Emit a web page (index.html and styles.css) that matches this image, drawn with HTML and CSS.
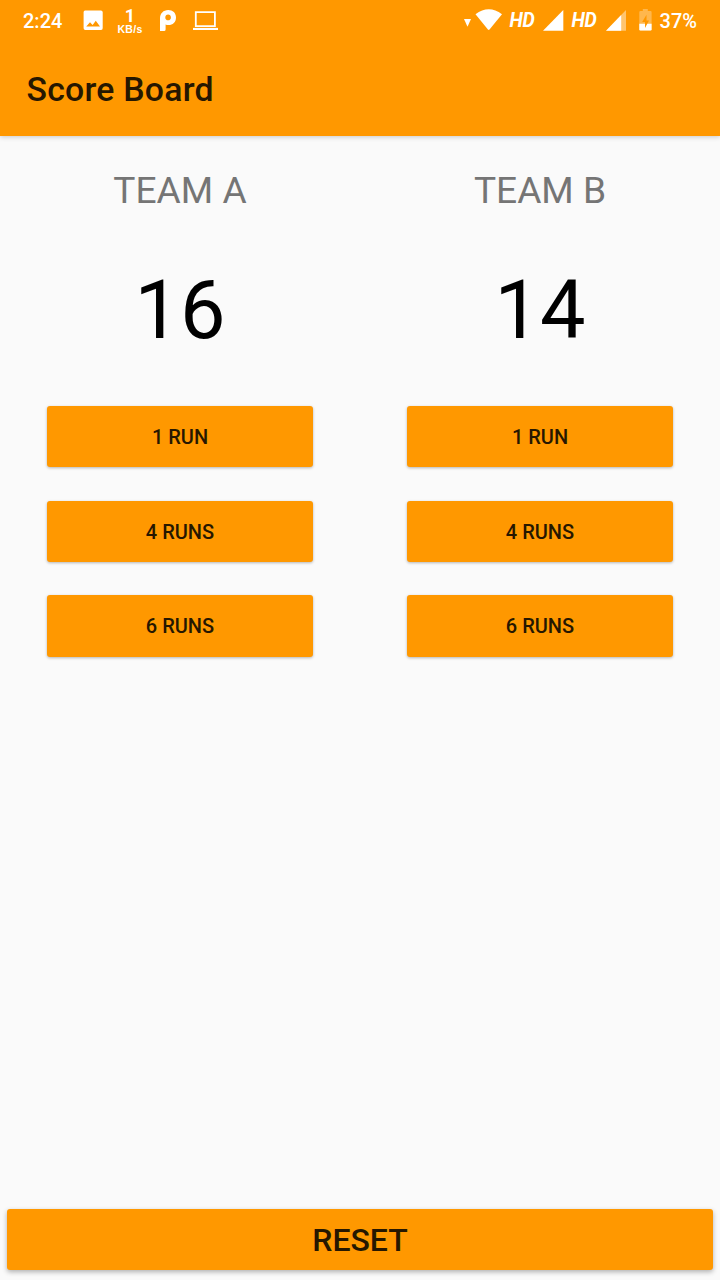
FILE: index.html
```html
<!DOCTYPE html>
<html lang="en">
<head>
<meta charset="utf-8">
<title>Score Board</title>
<link rel="stylesheet" href="styles.css">
</head>
<body>
<div class="screen">
  <header class="header">
    <div class="status">
      <div class="status-left">
        <span class="clock">2:24</span>
        <svg class="icon-picture" width="20" height="20" viewBox="0 0 20 20"><path fill="#fff" fill-rule="evenodd" d="M2 0.5H18A1.8 1.8 0 0 1 19.7 2V18A1.8 1.8 0 0 1 18 19.9H2A1.8 1.8 0 0 1 .6 18V2A1.8 1.8 0 0 1 2 .5ZM3.200 16.600H17L12.800 10.800L9.600 14.900L7 12.200Z"/></svg>
        <span class="speed"><span class="speed-value">1</span><span class="speed-unit">KB/s</span></span>
        <svg class="icon-p" width="17" height="22" viewBox="0 0 17 22"><path fill="#fff" fill-rule="evenodd" d="M0 21V8.5C0 3.5 3.3 0 8.2 0C12.800 0 16 3 16 7.400C16 12 12.800 15 8.500 15C7.300 15 6.400 14.800 5.600 14.400V19.500Q5.600 21 4 21ZM8.100 4.500C6.400 4.500 5.300 5.700 5.300 7.400S6.400 10.300 8.100 10.300S10.900 9.100 10.900 7.400S9.800 4.500 8.100 4.500Z"/></svg>
        <svg class="icon-laptop" width="26" height="20" viewBox="0 0 26 20"><path fill="none" stroke="#fff" stroke-width="1.800" d="M2.800 1.100H21.900V15.200H2.800Z"/><path fill="#fff" d="M0 16.900H25V19H0Z"/></svg>
      </div>
      <div class="status-right">
        <svg class="icon-arrow" width="7" height="8" viewBox="0 0 7 8"><path fill="#fff" d="M0 0H7L3.500 7.700Z"/></svg>
        <svg class="icon-wifi" width="28" height="22" viewBox="0 0 28 22"><path fill="#fff" d="M.5 5.200Q13.700-4.600 27 5.200L14.500 20.600Q13.700 21.500 12.900 20.600Z"/></svg>
        <span class="hd">HD</span>
        <svg class="icon-signal" width="21" height="21" viewBox="0 0 21 21"><path fill="#fff" d="M0 20.700L20.300 0V20.700Z"/></svg>
        <span class="hd">HD</span>
        <svg class="icon-signal-weak" width="21" height="21" viewBox="0 0 21 21"><path fill="#ffc56f" d="M0 20.700L20 0V20.700Z"/><path fill="#fff" d="M0 20.700L15.200 5V20.700Z"/></svg>
        <svg class="icon-battery" width="13" height="22" viewBox="0 0 13 22"><path fill="#ffb74d" d="M3.800 0H8.800V2.100H11.500Q12.600 2.100 12.600 3.300V20.300Q12.600 21.500 11.500 21.500H1.400Q.3 21.500 .3 20.300V3.300Q.3 2.100 1.400 2.100H3.800Z"/><path fill="#fff" d="M.3 14.700H12.600V20.300Q12.600 21.500 11.500 21.500H1.400Q.3 21.500 .3 20.300Z"/><path fill="#ff9800" d="M7.500 5.800L3.200 13H6V19L10 11.400H7.500Z"/></svg>
        <span class="percent">37%</span>
      </div>
    </div>
    <h1 class="title">Score Board</h1>
  </header>
  <main class="teams">
    <section class="team">
      <h2 class="team-name">TEAM A</h2>
      <div class="score">16</div>
      <div class="actions">
        <button class="button">1 RUN</button>
        <button class="button">4 RUNS</button>
        <button class="button">6 RUNS</button>
      </div>
    </section>
    <section class="team">
      <h2 class="team-name">TEAM B</h2>
      <div class="score">14</div>
      <div class="actions">
        <button class="button">1 RUN</button>
        <button class="button">4 RUNS</button>
        <button class="button">6 RUNS</button>
      </div>
    </section>
  </main>
  <footer class="footer"><button class="button button-reset">RESET</button></footer>
</div>
</body>
</html>
```
FILE: styles.css
```css
* { box-sizing: border-box; }
body { margin: 0; background: #fafafa; font-family: Roboto, sans-serif; }
svg { display: block; flex: none; }
.screen { height: 1280px; display: flex; flex-direction: column; overflow: hidden; }
.header {
  height: 136px;
  flex: none;
  background: #ff9800;
  box-shadow: 0 1px 5px rgba(0, 0, 0, .2);
}
.status {
  height: 42px;
  display: flex;
  justify-content: space-between;
  padding: 0 23px;
  color: #fff;
  font-size: 20px;
  font-weight: 500;
  line-height: 42px;
}
.status-left, .status-right { display: flex; align-items: flex-start; }
.clock { width: 60px; }
.icon-picture { margin-top: 10px; }
.speed {
  width: 34px;
  margin-left: 10px;
  padding-top: 8px;
  display: flex;
  flex-direction: column;
  align-items: center;
  font-weight: 700;
}
.speed-value { font-size: 18px; line-height: 15px; }
.speed-unit { font: 700 10.5px/13px "Liberation Sans", sans-serif; letter-spacing: .3px; }
.icon-p { margin: 10px 0 0 13px; }
.icon-laptop { margin: 11px 0 0 16px; }
.icon-arrow { margin-top: 19px; }
.icon-wifi { margin: 9px 0 0 4px; }
.hd { width: 26px; margin-left: 7px; font-size: 19.5px; font-weight: 700; font-style: italic; line-height: 41px; letter-spacing: -.5px; }
.icon-signal { margin: 10px 1px 0 7px; }
.icon-signal-weak { margin: 10px 0 0 8px; }
.icon-battery { margin: 9px 8px 0 12px; }
.title {
  margin: 0;
  padding: 28px 26.5px 0;
  color: #261700;
  font-size: 33.75px;
  line-height: 40px;
  font-weight: 500;
  letter-spacing: .25px;
}
.teams { flex: 1; display: grid; grid-template-columns: 1fr 1fr; }
.team { display: flex; flex-direction: column; align-items: center; padding: 32px 47px 0; }
.team-name { margin: 0; color: #757575; font-size: 37.125px; font-weight: 400; line-height: 46px; }
.score { margin-top: 49px; color: #000; font-size: 81px; line-height: 96px; }
.actions { width: 100%; margin-top: 47px; display: flex; flex-direction: column; gap: 33.4px; }
.button {
  width: 100%;
  height: 61.25px;
  padding: 2px 0 0;
  border: 0;
  border-radius: 3px;
  background: #ff9800;
  color: #261700;
  font: 500 20px/59px Roboto, sans-serif;
  box-shadow: 0 1px 3px rgba(0, 0, 0, .28);
}
.footer { padding: 0 7px 10px; }
.button-reset { display: block; font-size: 32px; box-shadow: 0 2px 5px rgba(0, 0, 0, .3); }
```
